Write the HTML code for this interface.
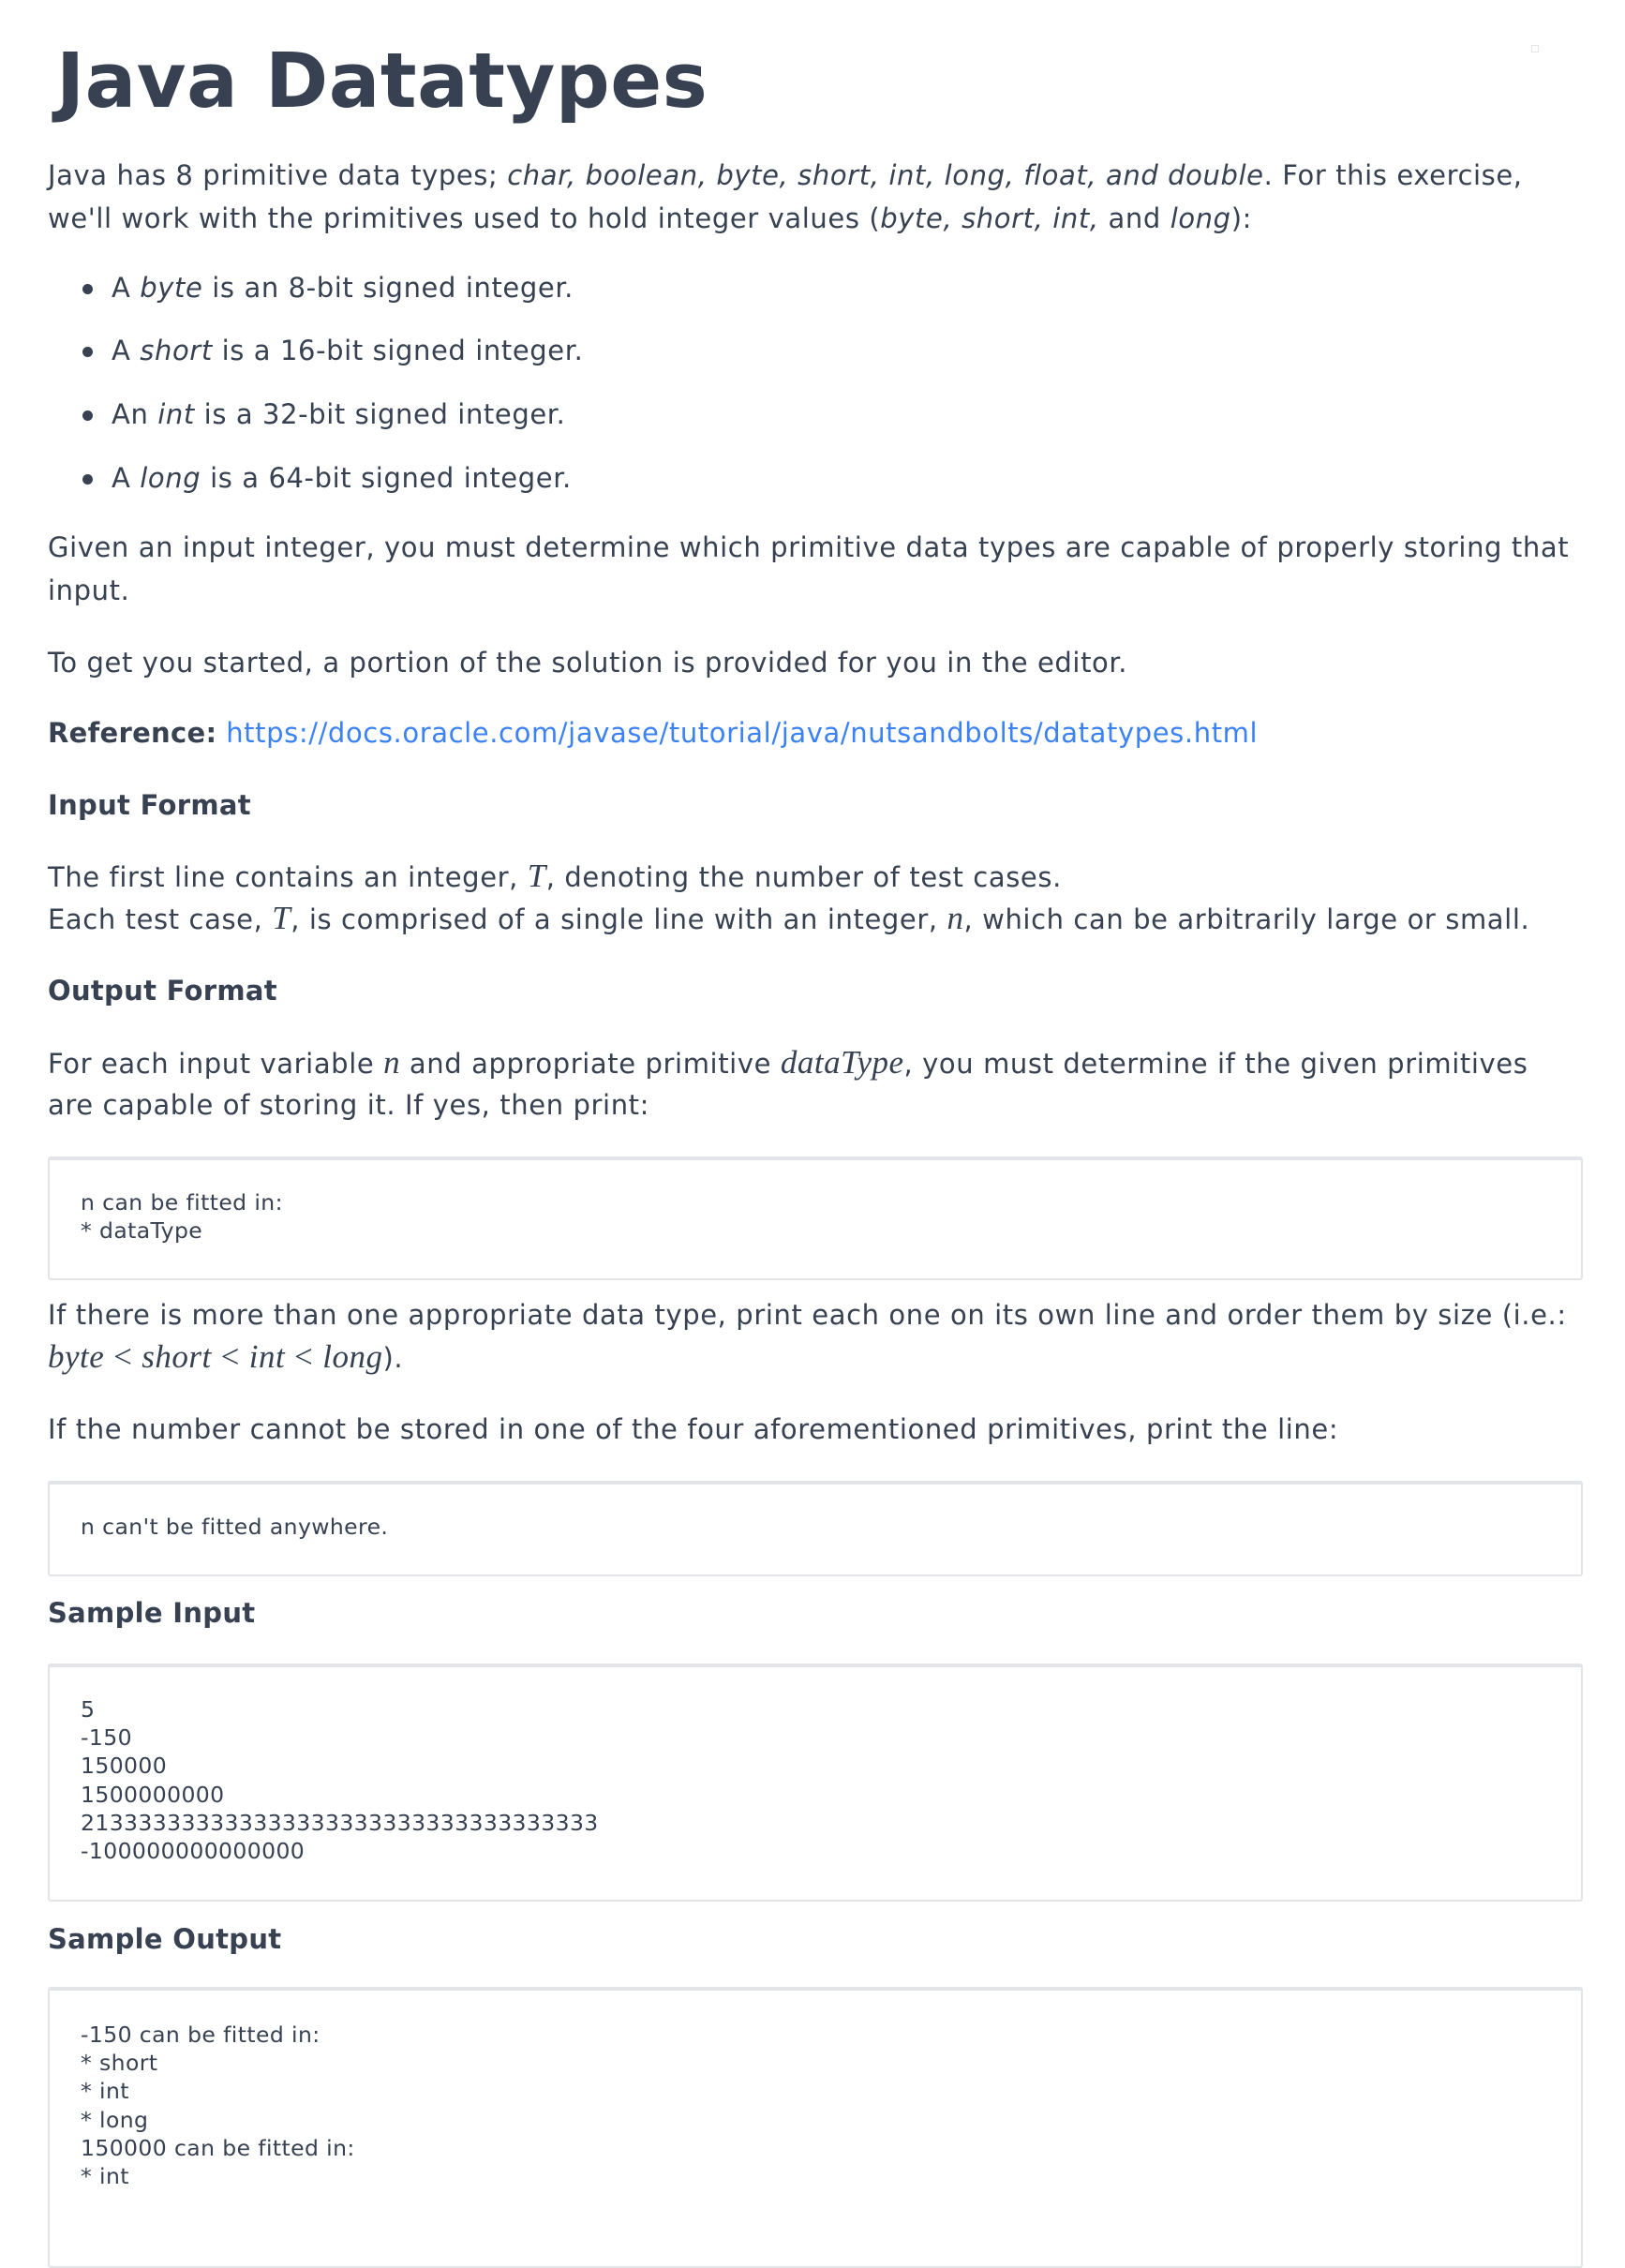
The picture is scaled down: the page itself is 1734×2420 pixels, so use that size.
<!DOCTYPE html>
<html><head><meta charset="utf-8"><style>
html,body{margin:0;padding:0;background:#fff}
body{width:1734px;height:2364px;position:relative;overflow:hidden;color:#374151;font-family:"DejaVu Sans","Liberation Sans",sans-serif;font-size:29px;letter-spacing:0.6px}
.l{position:absolute;left:51px;white-space:nowrap;line-height:46px;height:46px}
.b{font-weight:bold;letter-spacing:0.3px}
.m{font-family:"Liberation Serif","DejaVu Serif",serif;font-style:italic;font-size:35px;letter-spacing:0.5px}
.mr{font-family:"Liberation Serif","DejaVu Serif",serif;font-size:35px}
a{color:#3b82f6;text-decoration:none}
.dot{position:absolute;left:88px;width:11px;height:11px;border-radius:50%;background:#374151}
.box{position:absolute;left:51px;width:1638px;border:2px solid #e2e4e8;border-top-width:4px;border-radius:3px;box-sizing:border-box;background:#fff}
.code{position:absolute;left:86px;font-size:23.5px;letter-spacing:0.4px;line-height:30.2px;white-space:pre;color:#374151}
h1{position:absolute;left:60px;top:32px;margin:0;font-size:81px;letter-spacing:0.5px;line-height:110px;font-weight:bold;color:#374151}
</style></head><body>
<div style="position:absolute;left:1634px;top:48px;width:6px;height:6px;border:1px solid #e5e5e5"></div>
<h1>Java Datatypes</h1>
<div class="l" style="top:164px">Java has 8 primitive data types; <i>char, boolean, byte, short, int, long, float, and double</i>. For this exercise,</div>
<div class="l" style="top:210px">we'll work with the primitives used to hold integer values (<i>byte, short, int,</i> and <i>long</i>):</div>
<div class="dot" style="top:303px"></div><div class="l" style="left:119px;top:284px">A <i>byte</i> is an 8-bit signed integer.</div>
<div class="dot" style="top:370px"></div><div class="l" style="left:119px;top:351px">A <i>short</i> is a 16-bit signed integer.</div>
<div class="dot" style="top:438px"></div><div class="l" style="left:119px;top:419px">An <i>int</i> is a 32-bit signed integer.</div>
<div class="dot" style="top:506px"></div><div class="l" style="left:119px;top:487px">A <i>long</i> is a 64-bit signed integer.</div>
<div class="l" style="top:561px">Given an input integer, you must determine which primitive data types are capable of properly storing that</div>
<div class="l" style="top:607px">input.</div>
<div class="l" style="top:684px">To get you started, a portion of the solution is provided for you in the editor.</div>
<div class="l" style="top:759px"><span class="b">Reference:</span> <a>https://docs.oracle.com/javase/tutorial/java/nutsandbolts/datatypes.html</a></div>
<div class="l b" style="top:836px">Input Format</div>
<div class="l" style="top:912px">The first line contains an integer, <span class="m">T</span>, denoting the number of test cases.</div>
<div class="l" style="top:957px">Each test case, <span class="m">T</span>, is comprised of a single line with an integer, <span class="m">n</span>, which can be arbitrarily large or small.</div>
<div class="l b" style="top:1034px">Output Format</div>
<div class="l" style="top:1111px">For each input variable <span class="m">n</span> and appropriate primitive <span class="m">dataType</span>, you must determine if the given primitives</div>
<div class="l" style="top:1156px">are capable of storing it. If yes, then print:</div>
<div class="box" style="top:1234px;height:132px"></div>
<div class="code" style="top:1268px">n can be fitted in:
* dataType</div>
<div class="l" style="top:1380px">If there is more than one appropriate data type, print each one on its own line and order them by size (i.e.:</div>
<div class="l" style="top:1425px"><span class="m">byte</span> <span class="mr">&lt;</span> <span class="m">short</span> <span class="mr">&lt;</span> <span class="m">int</span> <span class="mr">&lt;</span> <span class="m">long</span>).</div>
<div class="l" style="top:1502px">If the number cannot be stored in one of the four aforementioned primitives, print the line:</div>
<div class="box" style="top:1580px;height:102px"></div>
<div class="code" style="top:1614px">n can't be fitted anywhere.</div>
<div class="l b" style="top:1698px">Sample Input</div>
<div class="box" style="top:1775px;height:254px"></div>
<div class="code" style="top:1809px">5
-150
150000
1500000000
213333333333333333333333333333333333
-100000000000000</div>
<div class="l b" style="top:2046px">Sample Output</div>
<div class="box" style="top:2120px;height:300px"></div>
<div class="code" style="top:2156px">-150 can be fitted in:
* short
* int
* long
150000 can be fitted in:
* int</div>
</body></html>
